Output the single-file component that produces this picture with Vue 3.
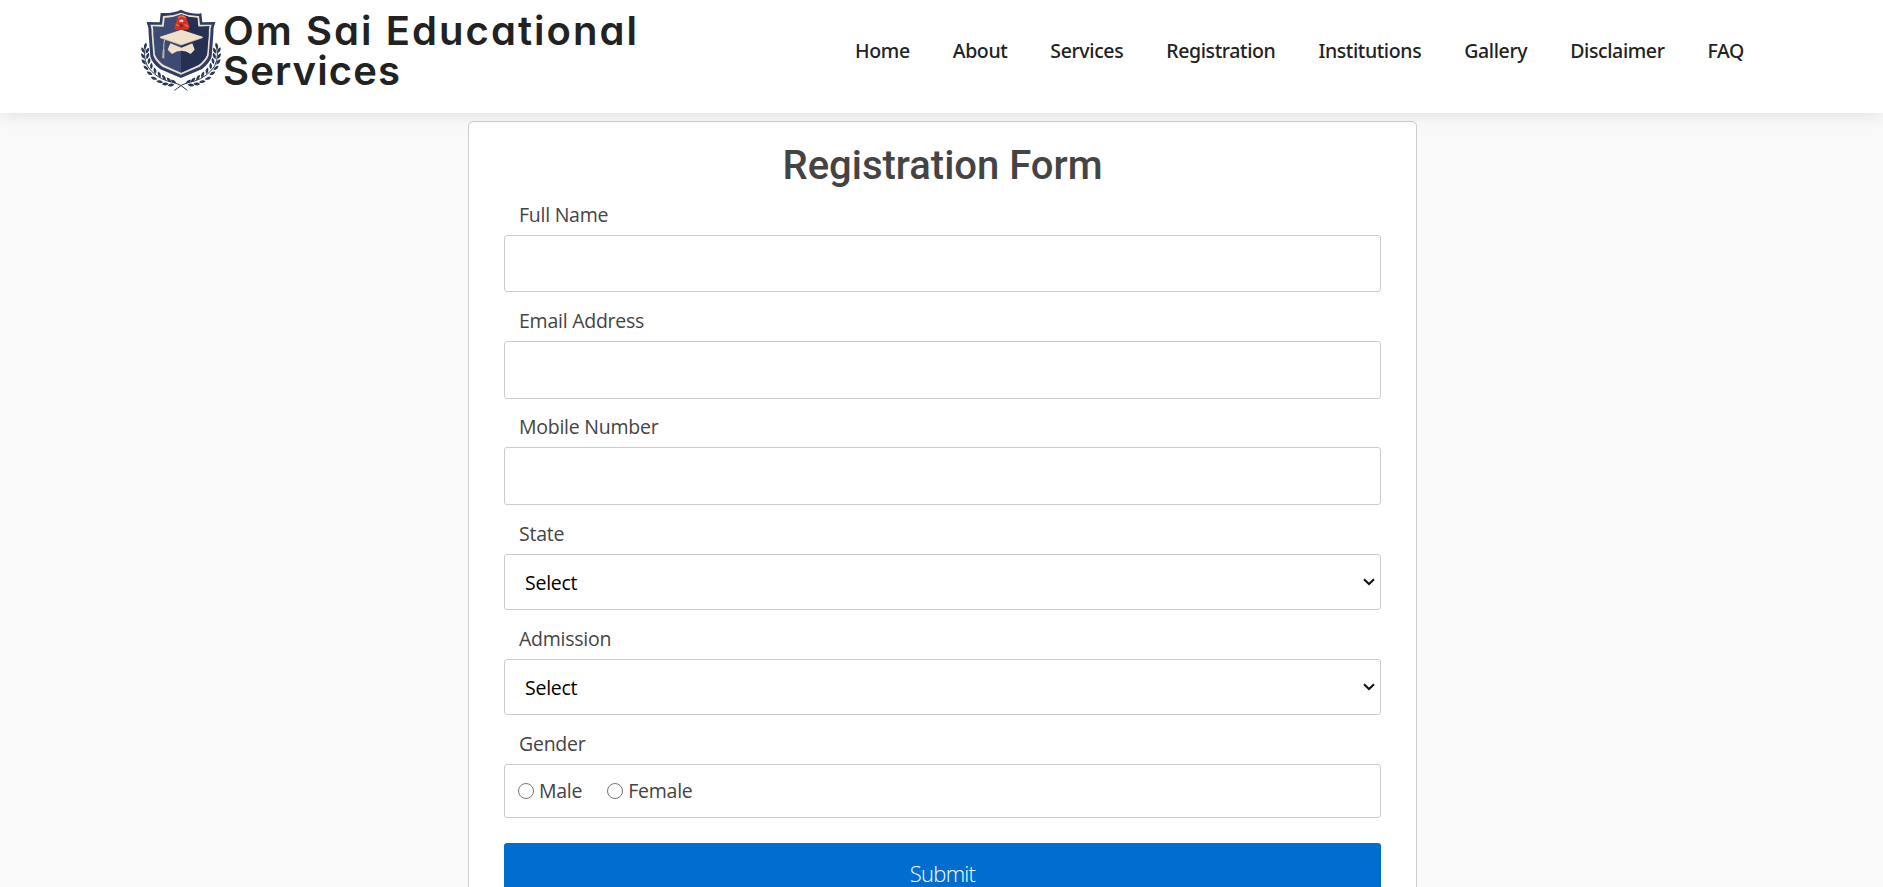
<script setup>
const links = ['Home', 'About', 'Services', 'Registration', 'Institutions', 'Gallery', 'Disclaimer', 'FAQ']
const textFields = ['Full Name', 'Email Address', 'Mobile Number']
const selectFields = ['State', 'Admission']

// Leaf positions (x, y, rotation) of the laurel's left branch; the right branch is its mirror image.
const leaves = [
  [46, 138, 15], [39, 151, -25], [52, 152, 25], [39, 168, -32], [53, 168, 20],
  [41, 186, -38], [57, 183, 12], [48, 204, -48], [64, 198, 2], [59, 220, -60],
  [75, 212, -12], [72, 235, -70], [88, 224, -22], [89, 245, -80], [102, 233, -32],
  [106, 252, -88], [117, 240, -42], [123, 255, -100], [131, 245, -55]
]
</script>

<template>
  <div class="page">
    <header class="header">
      <a class="brand">
        <svg class="logo" viewBox="30 24 246 252" aria-hidden="true">
          <path d="M153 29 Q176 41 207 41 L214 39 L217 67 L256 66 Q249 82 250 103 L245 170 Q238 190 215 208 L153 234 L91 208 Q67 190 61 170 L56 103 Q57 82 50 66 L89 67 L92 39 Q130 41 153 29Z" fill="#303d63" />
          <path d="M153 38 Q179 49 207 48 L210 74 L245 74 Q240 86 241 104 L236 167 Q229 184 209 200 L153 224 L97 200 Q77 184 70 167 L65 104 Q66 86 61 74 L96 74 L99 48 Q127 49 153 38Z" fill="#efe0ce" />
          <path d="M153 43 Q178 54 202 53 L205 80 L238 79 Q235 90 236 104 L231 164 Q223 182 205 195 L153 218 L101 195 Q83 182 75 164 L70 104 Q71 90 68 79 L101 80 L104 53 Q128 54 153 43Z" fill="#3c4b73" />
          <path d="M153 43 Q178 54 202 53 L205 80 L238 79 Q235 90 236 104 L231 164 Q223 182 205 195 L153 218Z" fill="#253052" />
          <path d="M121 130 L154 143 L187 130 L194 149 L182 162 Q168 152 154 152 Q140 152 126 162 L113 149Z" fill="#f1dfc9" />
          <path d="M90 110 L154 89 L218 110 L218 113 L154 135 L90 113Z" fill="#f1dfc9" />
          <path d="M90 113 L154 135 L218 113" fill="none" stroke="#d9c6b2" stroke-width="2" />
          <path d="M104 119 Q101 126 101 151" fill="none" stroke="#d9c6b2" stroke-width="3" />
          <path d="M98 149 L104 149 L103 176 L96 173Z" fill="#b8aaa1" />
          <path d="M132 85 L137 70 L142 53 L150 45 L162 45 L170 54 L174 68 L179 80 L174 89 L136 89Z" fill="#d92f20" />
          <path d="M144 53 Q155 43 167 54 M138 74 L148 78 M164 74 L175 80" fill="none" stroke="#f37245" stroke-width="4" />
          <path d="M147 62 L153 58 L161 61 L158 67 L149 66Z" fill="#ead2cf" />
          <path d="M148 75 L153 69 L161 79 L151 83Z" fill="#82261f" />
          <g v-for="side in ['left', 'right']" :key="side" :transform="side === 'right' ? 'translate(306 0) scale(-1 1)' : undefined">
            <path d="M46 140 Q37 188 64 213 Q90 241 133 248 Q151 252 172 271" fill="none" stroke="#293753" stroke-width="3" />
            <path
              v-for="([x, y, turn], i) in leaves"
              :key="i"
              d="M0 -10 C5 -5 6 3 0 10 C-6 3 -5 -5 0 -10Z"
              :transform="`translate(${x} ${y}) rotate(${turn})`"
              fill="#293753"
            />
          </g>
        </svg>
        <span class="brand-name">
          <span class="brand-line wide">Om Sai Educational</span>
          <span class="brand-line">Services</span>
        </span>
      </a>
      <nav class="nav">
        <a v-for="link in links" :key="link">{{ link }}</a>
      </nav>
    </header>

    <form class="card" @submit.prevent>
      <h1>Registration Form</h1>
      <div v-for="name in textFields" :key="name" class="field">
        <label>{{ name }}</label>
        <input type="text" class="control" :aria-label="name">
      </div>
      <div v-for="name in selectFields" :key="name" class="field select-field">
        <label>{{ name }}</label>
        <div class="control select">
          <span>Select</span>
          <svg class="chevron" viewBox="0 0 12 8" aria-hidden="true"><path d="M1 1.2 L6 6 L11 1.2" /></svg>
        </div>
      </div>
      <div class="field gender-field">
        <label>Gender</label>
        <div class="control gender">
          <span class="option"><i class="radio"></i>Male</span>
          <span class="option"><i class="radio"></i>Female</span>
        </div>
      </div>
      <button type="submit">Submit</button>
    </form>
  </div>
</template>

<style>
html, body { margin: 0; overflow: hidden; background: #f9f9f9; }
</style>

<style scoped>
.page {
  height: 887px;
  overflow: hidden;
  background: #f9f9f9;
  color: #444;
  font-family: "Open Sans", "Noto Sans", sans-serif;
}
.page * { box-sizing: border-box; }
.header {
  position: relative;
  z-index: 1;
  display: flex;
  justify-content: space-between;
  height: 113px;
  padding: 8px 139px 0 140px;
  background: #fff;
  box-shadow: 0 2px 15px rgba(0, 0, 0, 0.1);
}
.brand { display: flex; align-items: flex-start; }
.logo { width: 82px; height: 84px; }
.brand-name {
  margin: 3px 0 0 1px;
  color: #222;
  font: 600 40px/40px Inter, sans-serif;
  font-feature-settings: "cv11";
  white-space: nowrap;
}
.brand-line { display: block; letter-spacing: 1.15px; }
.brand-line.wide { letter-spacing: 2.05px; }
.nav {
  display: flex;
  gap: 43px;
  padding-top: 29px;
  color: #222;
  font: 500 19.5px/28px "Noto Sans", sans-serif;
  letter-spacing: -0.38px;
  white-space: nowrap;
}
.card {
  width: 949px;
  height: 830px;
  margin: 8px 0 0 468px;
  padding: 20px 35px 0;
  border: 1px solid #ccc;
  border-radius: 5px;
  background: #fff;
}
h1 {
  height: 48px;
  margin: 0 0 9px;
  font: 500 40px/48px Roboto, sans-serif;
  text-align: center;
}
.field { height: 106.2px; }
.select-field { height: 105.3px; }
.gender-field { height: 114.8px; }
label, .select, .gender {
  font-size: 19.5px;
  font-weight: 400;
  letter-spacing: -0.25px;
}
label {
  display: block;
  height: 36px;
  padding: 0 15px;
  line-height: 31px;
}
.control {
  display: flex;
  align-items: center;
  width: 100%;
  height: 57.4px;
  border: 1px solid #ccc;
  border-radius: 3px;
  background: #fff;
  outline: none;
}
.select {
  justify-content: space-between;
  height: 56px;
  padding: 0 5px 0 20px;
  color: #000;
}
.select span { padding-top: 1px; }
.chevron { width: 12px; height: 8px; fill: none; stroke: #111; stroke-width: 2; }
.gender { gap: 25px; height: 54px; padding: 0 0 1px 13px; }
.option { display: flex; align-items: center; gap: 5px; }
.radio { width: 16px; height: 16px; border: 1px solid #767676; border-radius: 50%; }
button {
  display: block;
  width: 100%;
  height: 60px;
  padding: 0;
  border: 0;
  border-radius: 3px;
  background: #006dcf;
  color: #fff;
  font: 300 22px/60px "Open Sans", sans-serif;
  letter-spacing: -0.75px;
}
</style>
